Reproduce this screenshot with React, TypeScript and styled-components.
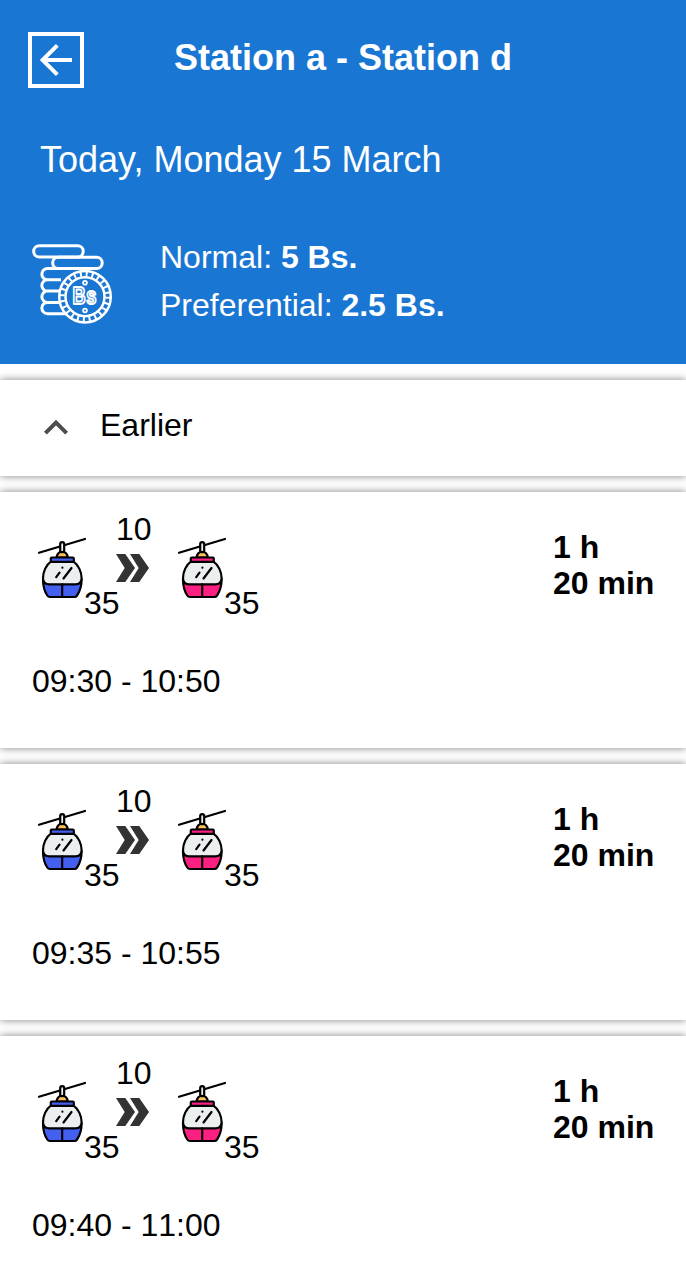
import React from "react";
import styled, { createGlobalStyle } from "styled-components";

const GlobalStyle = createGlobalStyle`
  * { box-sizing: border-box; }
  body {
    margin: 0;
    background: #fff;
    color: #000;
    font-family: "Liberation Sans", Arial, sans-serif;
    font-size: 32px;
    line-height: 36px;
  }
`;

const Page = styled.main`
  height: 1270px;
  overflow: hidden;
  display: flex;
  flex-direction: column;
  gap: 16px;
`;

const Header = styled.header`
  flex: none;
  height: 364px;
  padding: 32px 28px 0;
  background: #1976d2;
  color: #fff;
`;

const TitleBar = styled.div`
  display: grid;
  grid-template-columns: 56px 1fr 56px;
  height: 56px;
`;

const BackButton = styled.button`
  width: 56px;
  height: 56px;
  padding: 0;
  border: 4px solid #fff;
  background: transparent;
  color: #fff;
  svg { display: block; }
`;

const Title = styled.h1`
  margin: 5px 0 0;
  font-size: 36px;
  line-height: 42px;
  font-weight: 700;
  text-align: center;
  white-space: nowrap;
`;

const DateLine = styled.p`
  margin: 51px 0 0 12px;
  font-size: 36px;
  line-height: 42px;
`;

const Fares = styled.div`
  display: flex;
  gap: 44px;
  margin: 52px 0 0 4px;
`;

const Coins = styled.svg`
  width: 84px;
  height: 84px;
  margin-top: 11px;
`;

const FareList = styled.div`
  line-height: 48px;
`;

const Card = styled.section`
  flex: none;
  background: #fff;
  box-shadow: 0 0 8px gray;
`;

const EarlierCard = styled(Card)`
  height: 96px;
  padding: 27px 40px;
  display: flex;
  gap: 28px;
`;

const TripCard = styled(Card)`
  height: 256px;
  padding: 19px 32px 0 36px;
`;

const TripTop = styled.div`
  display: flex;
  justify-content: space-between;
  height: 152px;
`;

const Route = styled.div`
  display: flex;
`;

const Cabin = styled.svg`
  width: 48px;
  height: 64px;
  margin-top: 25px;
  overflow: visible;
`;

const Minutes = styled.span`
  width: 32px;
  margin-top: 74px;
  white-space: nowrap;
`;

const Transfer = styled.div`
  display: flex;
  flex-direction: column;
  gap: 7px;
  width: 60px;
`;

const Duration = styled.div`
  width: 101px;
  margin-top: 18px;
  font-weight: 700;
  white-space: nowrap;
`;

const Times = styled.div`
  margin-left: -4px;
  font-kerning: none;
`;

const CoinsIcon = () => (
  <Coins viewBox="0 0 84 84" fill="none" stroke="#fff" strokeWidth="3" strokeLinejoin="round">
    <rect x="1.7" y="1.7" width="49.5" height="11.3" rx="5.6" />
    <rect x="20.7" y="13.2" width="49.5" height="11.3" rx="5.6" />
    <path d="M36 24.5H15.5a5.6 5.6 0 0 0 0 11.3H29M27 35.8H15.5a5.6 5.6 0 0 0 0 11.3H26M27 47.1H15.5a5.6 5.6 0 0 0 0 11.3H29M29 58.4H15.5a5.6 5.6 0 0 0 0 11.3H35" />
    <circle cx="53" cy="52.7" r="25.8" fill="#1976d2" strokeWidth="2.5" />
    <circle cx="53" cy="52.7" r="22.7" strokeWidth="5" strokeDasharray="2 3.943" />
    <circle cx="53" cy="52.7" r="19.5" strokeWidth="2.5" />
    <circle cx="53" cy="38.7" r="1.9" strokeWidth="1.8" />
    <circle cx="53" cy="66.5" r="1.9" strokeWidth="1.8" />
    <g transform="translate(40.4 60) scale(.76 1)">
      <text fontFamily="Liberation Sans, sans-serif" fontWeight="700" fontSize="24" letterSpacing="1" fill="#1976d2" strokeWidth="2">Bs</text>
    </g>
  </Coins>
);

const CabinIcon = ({ color }: { color: string }) => (
  <Cabin viewBox="0 0 48 64" fill="none" stroke="#000" strokeWidth="2.2" strokeLinecap="round" strokeLinejoin="round">
    <path d="M3 16.8 49 3" />
    <path d="M20.8 21.5v-.5a5.4 5.4 0 0 1 10.8 0v.5Z" fill="#fdbf5d" />
    <rect x="24.2" y="6.2" width="4" height="10" rx="2" fill="#eceff1" />
    <path d="M7 43c0 6.5 1.8 12.8 4.3 16.5.7 1 1.5 1.5 2.6 1.5h24.6c1.1 0 1.9-.5 2.6-1.5C43.6 55.8 45.6 49.5 45.6 43Z" fill={color} />
    <path d="M14.8 25.7C10 29 7 36 7 42.2c0 4 2.5 6.1 6.5 6.1h25.6c4 0 6.5-2.1 6.5-6.1C45.6 36 42.5 29 37.5 25.7Z" fill="#eceff0" />
    <path d="M26.2 48.3V61" />
    <rect x="14.8" y="21.5" width="23" height="4.3" rx="1" fill={color} />
    <path d="m27.5 42.5 8-10.5M20.2 41.2l3.3-4.5M26.4 31.7v.01" />
  </Cabin>
);

const BLUE = "#4460f1";
const PINK = "#fc2082";

const Trip = ({ times }: { times: string }) => (
  <TripCard>
    <TripTop>
      <Route>
        <CabinIcon color={BLUE} />
        <Minutes>35</Minutes>
        <Transfer>
          <span>10</span>
          <svg width="34" height="28" viewBox="0 0 34 28" fill="#333">
            <path d="M0 0h9.3l9.7 14-9.7 14H0l8.7-14ZM14 0h9.3L33 14l-9.700 14H14l8.700-14Z" />
          </svg>
        </Transfer>
        <CabinIcon color={PINK} />
        <Minutes>35</Minutes>
      </Route>
      <Duration>
        1 h<br />20 min
      </Duration>
    </TripTop>
    <Times>{times}</Times>
  </TripCard>
);

const trips = ["09:30 - 10:50", "09:35 - 10:55", "09:40 - 11:00"];

export default function App() {
  return (
    <Page>
      <GlobalStyle />
      <Header>
        <TitleBar>
          <BackButton aria-label="Back">
            <svg width="48" height="48" viewBox="0 0 48 48" fill="none" stroke="#fff" strokeWidth="4">
              <path d="M40 24H11M25.3 9.3 10.6 24l14.7 14.7" />
            </svg>
          </BackButton>
          <Title>Station a - Station d</Title>
        </TitleBar>
        <DateLine>Today, Monday 15 March</DateLine>
        <Fares>
          <CoinsIcon />
          <FareList>
            <div>Normal: <b>5 Bs.</b></div>
            <div>Preferential: <b>2.5 Bs.</b></div>
          </FareList>
        </Fares>
      </Header>
      <EarlierCard>
        <svg width="32" height="40" viewBox="0 0 32 40" fill="none" stroke="#4d4d4d" strokeWidth="4">
          <path d="M5.4 26.2 16 15.6l10.6 10.6" />
        </svg>
        <span>Earlier</span>
      </EarlierCard>
      {trips.map((times) => (
        <Trip key={times} times={times} />
      ))}
    </Page>
  );
}
